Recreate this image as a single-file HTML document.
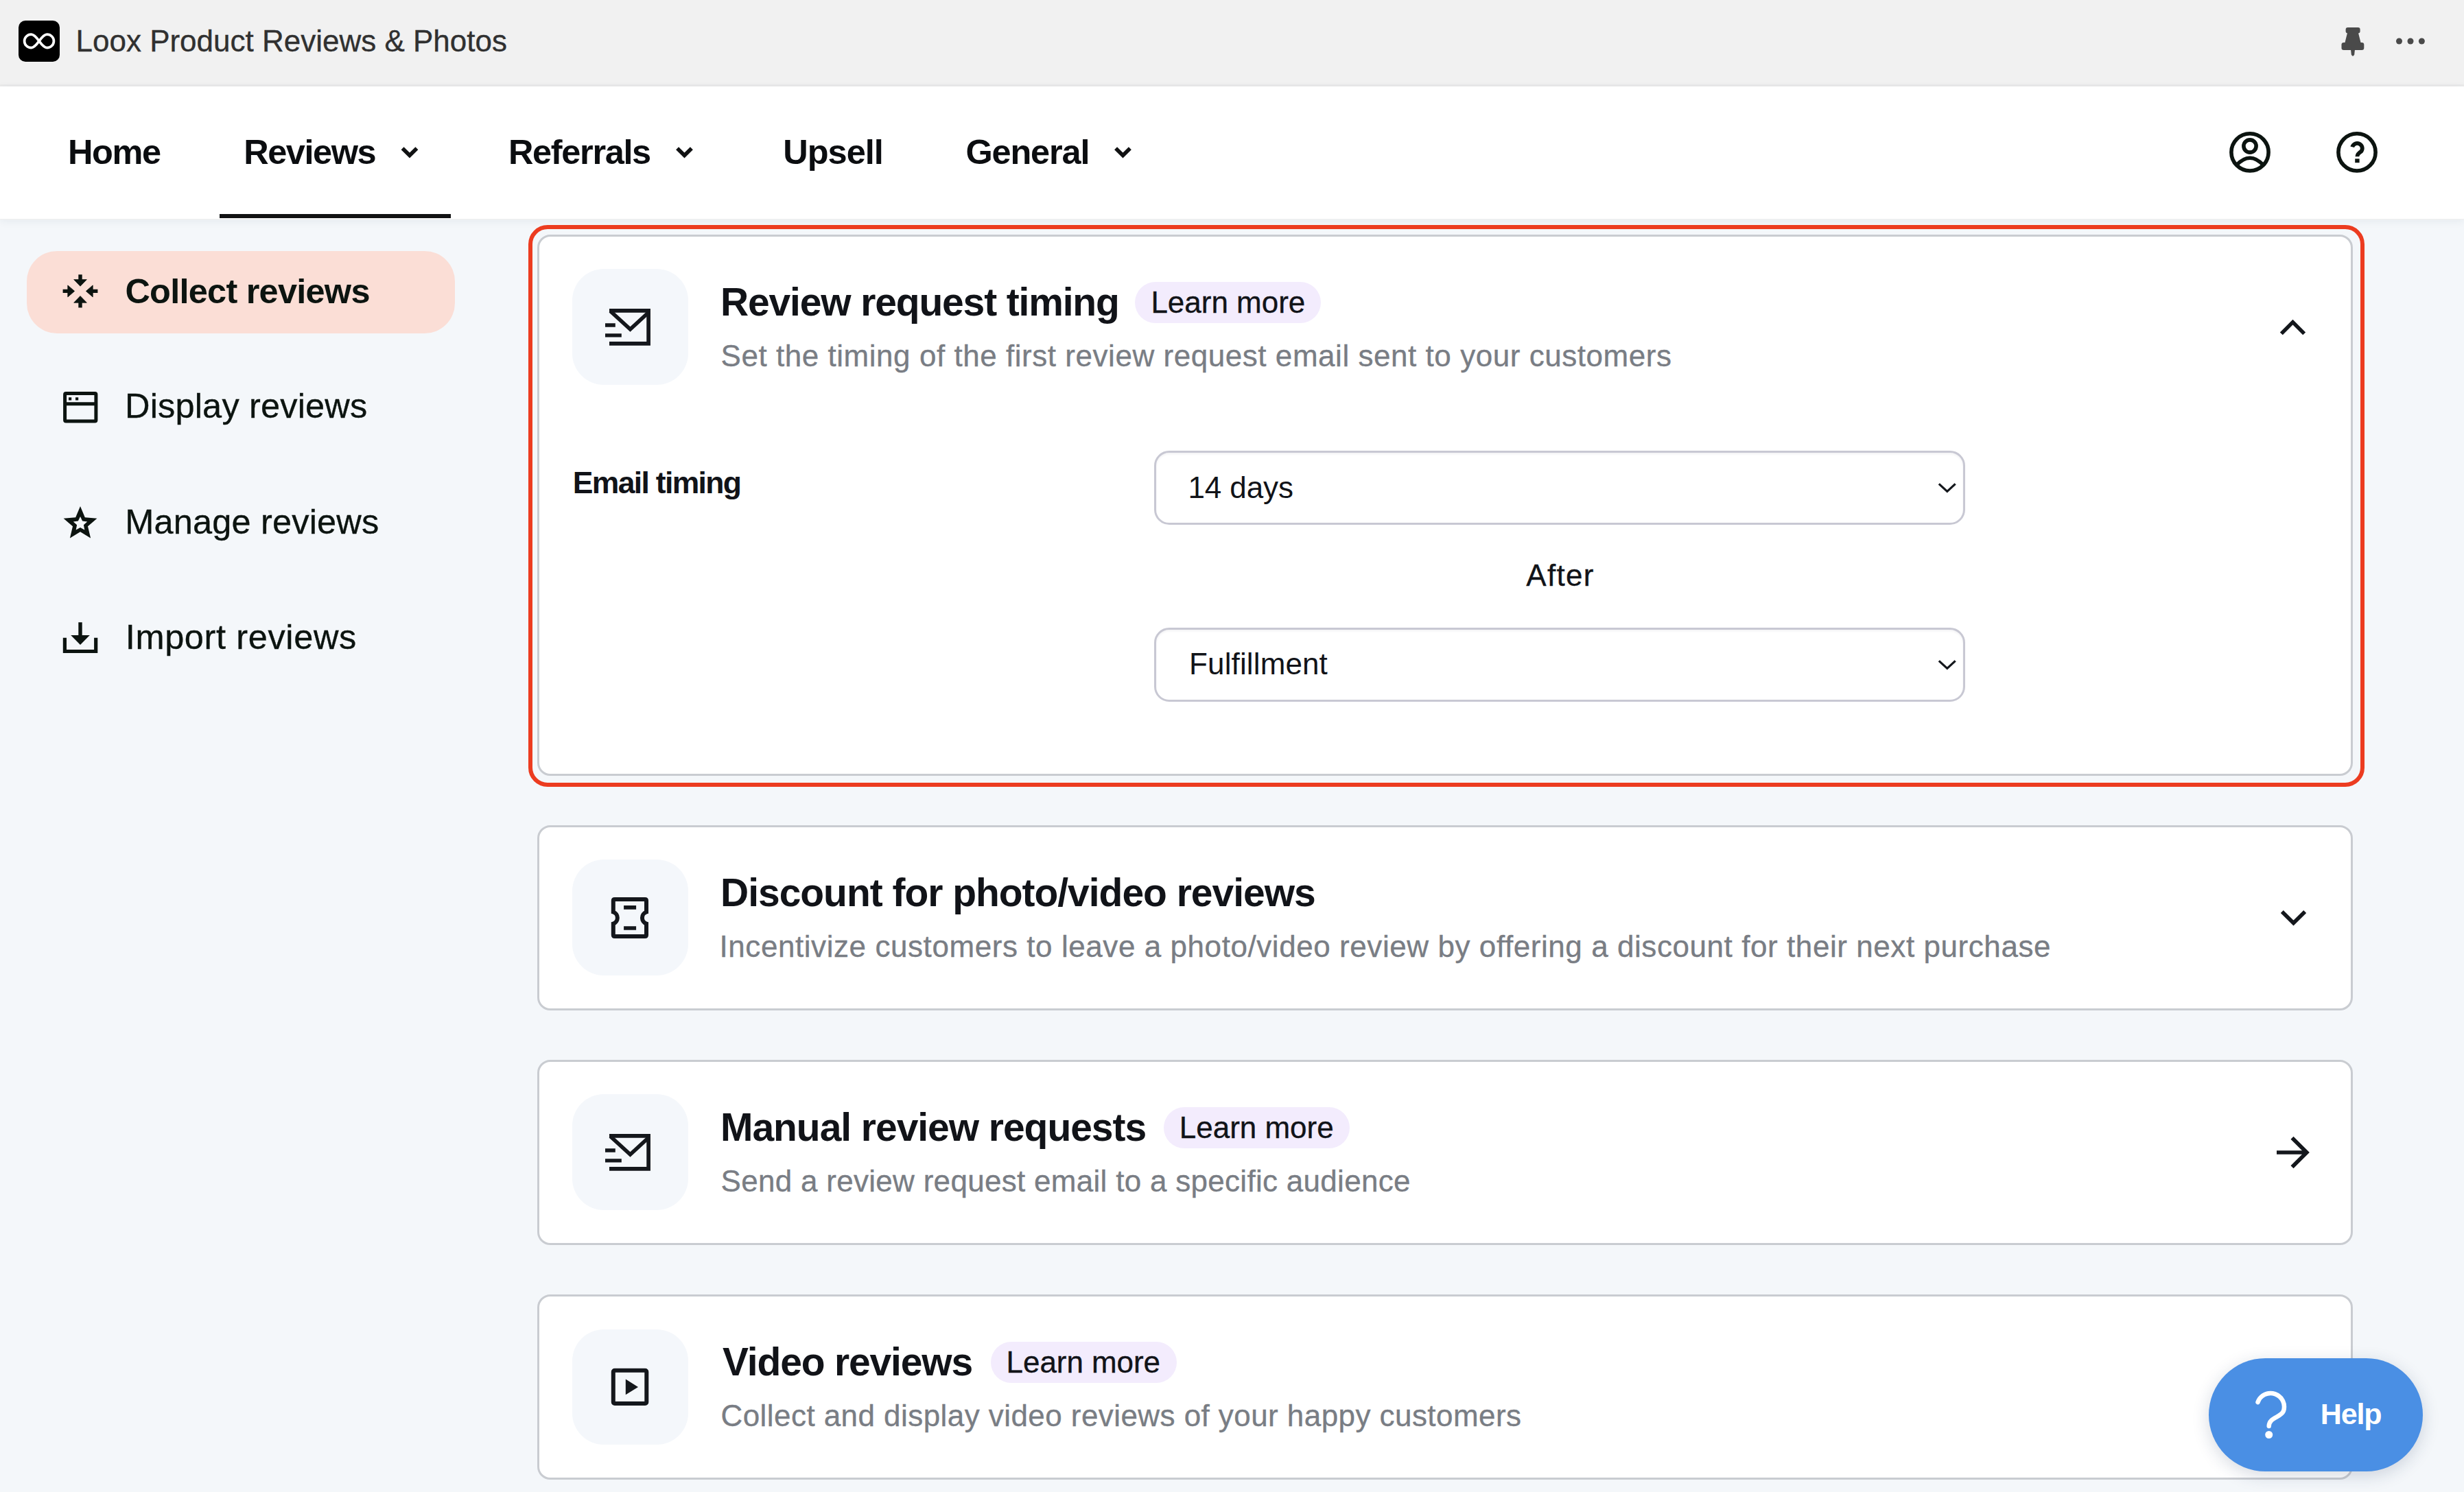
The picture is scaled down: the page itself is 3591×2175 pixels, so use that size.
<!DOCTYPE html>
<html lang="en"><head><meta charset="utf-8"><title>Loox Product Reviews &amp; Photos</title>
<style>
html,body{margin:0;padding:0}
body{width:3591px;height:2175px;overflow:hidden;position:relative;background:#f4f7fa;font-family:"Liberation Sans",sans-serif}
.a{position:absolute;box-sizing:border-box}
.t{position:absolute;white-space:pre;line-height:1;font-family:"Liberation Sans",sans-serif}
#topbar{left:0;top:0;width:3591px;height:126px;background:#f1f1f1;border-bottom:3px solid #eaeaea}
#nav{left:0;top:126px;width:3591px;height:192.5px;background:#fff;box-shadow:0 1px 0 #efefef,0 3px 12px rgba(30,60,90,.07)}
#underline{left:320px;top:312px;width:337px;height:6px;background:#111213}
#logo{left:27px;top:30px;width:60px;height:60px;border-radius:10px;background:#000}
#pill{left:39.3px;top:366.2px;width:624px;height:119.6px;border-radius:44px;background:#fbded6}
.card{left:783px;width:2646px;border:3px solid #c9ccd1;border-radius:19px;background:#fff}
#redo{left:769.6px;top:328px;width:2676px;height:819px;border:6.2px solid #ec3c20;border-radius:28px}
.tile{left:834px;width:169px;height:168.5px;border-radius:46px;background:#f4f7fb}
.lm{height:59.8px;border-radius:30px;background:#f3ecfd}
.sel{left:1682px;width:1182px;height:108px;border:3px solid #c8c8d3;border-radius:22px;background:#fff;box-shadow:inset 0 2px 3px rgba(30,40,60,.06)}
#help{left:3219px;top:1980px;width:312px;height:165px;border-radius:83px;background:#4a8fe4;box-shadow:0 6px 24px rgba(30,50,90,.18)}
.r{-webkit-text-stroke:.35px currentColor}
svg{position:absolute;overflow:visible}

</style></head>
<body>
<header>
<div class="a" id="topbar"></div>
<div class="a" id="logo"></div>
<div class="t r" style="left:110.50px;top:37.75px;font-size:44px;font-weight:400;color:#303030;letter-spacing:-0.002px">Loox Product Reviews &amp; Photos</div>
</header>
<nav>
<div class="a" id="nav"></div>
<div class="a" id="underline"></div>
<div class="t" style="left:99.00px;top:197.25px;font-size:50.5px;font-weight:700;color:#0b0d10;letter-spacing:-1.406px">Home</div>
<div class="t" style="left:355.20px;top:197.25px;font-size:50.5px;font-weight:700;color:#0b0d10;letter-spacing:-1.440px">Reviews</div>
<div class="t" style="left:741.00px;top:197.25px;font-size:50.5px;font-weight:700;color:#0b0d10;letter-spacing:-1.347px">Referrals</div>
<div class="t" style="left:1141.20px;top:197.25px;font-size:50.5px;font-weight:700;color:#0b0d10;letter-spacing:-0.984px">Upsell</div>
<div class="t" style="left:1407.40px;top:197.25px;font-size:50.5px;font-weight:700;color:#0b0d10;letter-spacing:-1.173px">General</div>
</nav>
<aside>
<div class="a" id="pill"></div>
<div class="t" style="left:182.40px;top:399.55px;font-size:50.5px;font-weight:700;color:#0c1410;letter-spacing:-0.758px">Collect reviews</div>
<div class="t r" style="left:182.00px;top:567.45px;font-size:50.5px;font-weight:400;color:#0c1410;letter-spacing:0.176px">Display reviews</div>
<div class="t r" style="left:182.20px;top:735.65px;font-size:50.5px;font-weight:400;color:#0c1410;letter-spacing:0.181px">Manage reviews</div>
<div class="t r" style="left:182.80px;top:903.75px;font-size:50.5px;font-weight:400;color:#0c1410;letter-spacing:0.625px">Import reviews</div>
</aside>
<main>
<div class="a" id="redo"></div>
<section>
<div class="a card" style="top:342px;height:789px"></div>
<div class="a tile" style="top:392.3px"></div>
<div class="a lm" style="left:1654px;top:411.2px;width:271px"></div>
<div class="a sel" style="top:657px"></div>
<div class="a sel" style="top:915px"></div>
<div class="t" style="left:1050.00px;top:411.75px;font-size:57px;font-weight:700;color:#111318;letter-spacing:-1.158px">Review request timing</div>
<div class="t r" style="left:1677.40px;top:419.05px;font-size:44px;font-weight:400;color:#111318;letter-spacing:-0.015px">Learn more</div>
<div class="t r" style="left:1050.50px;top:496.50px;font-size:44px;font-weight:400;color:#797d84;letter-spacing:0.543px">Set the timing of the first review request email sent to your customers</div>
<div class="t" style="left:834.80px;top:682.13px;font-size:44.5px;font-weight:700;color:#111318;letter-spacing:-1.680px">Email timing</div>
<div class="t" style="left:1731.50px;top:688.55px;font-size:44px;font-weight:400;color:#111318;letter-spacing:-0.101px">14 days</div>
<div class="t r" style="left:2224.30px;top:817.35px;font-size:44px;font-weight:400;color:#111318;letter-spacing:1.283px">After</div>
<div class="t" style="left:1733.10px;top:946.45px;font-size:44px;font-weight:400;color:#111318;letter-spacing:0.123px">Fulfillment</div>
</section>
<section>
<div class="a card" style="top:1203px;height:270px"></div>
<div class="a tile" style="top:1253.3px"></div>
<div class="t" style="left:1050.00px;top:1272.75px;font-size:57px;font-weight:700;color:#111318;letter-spacing:-1.024px">Discount for photo/video reviews</div>
<div class="t r" style="left:1048.50px;top:1357.50px;font-size:44px;font-weight:400;color:#797d84;letter-spacing:0.568px">Incentivize customers to leave a photo/video review by offering a discount for their next purchase</div>
</section>
<section>
<div class="a card" style="top:1545px;height:270px"></div>
<div class="a tile" style="top:1595.3px"></div>
<div class="a lm" style="left:1695.8px;top:1614.2px;width:271.5px"></div>
<div class="t" style="left:1050.00px;top:1614.75px;font-size:57px;font-weight:700;color:#111318;letter-spacing:-1.047px">Manual review requests</div>
<div class="t r" style="left:1718.80px;top:1621.85px;font-size:44px;font-weight:400;color:#111318;letter-spacing:-0.015px">Learn more</div>
<div class="t r" style="left:1050.50px;top:1699.50px;font-size:44px;font-weight:400;color:#797d84;letter-spacing:0.294px">Send a review request email to a specific audience</div>
</section>
<section>
<div class="a card" style="top:1887px;height:270px"></div>
<div class="a tile" style="top:1937.5px"></div>
<div class="a lm" style="left:1443.8px;top:1956.2px;width:271.3px"></div>
<div class="t" style="left:1053.00px;top:1956.75px;font-size:57px;font-weight:700;color:#111318;letter-spacing:-1.163px">Video reviews</div>
<div class="t r" style="left:1466.60px;top:1963.85px;font-size:44px;font-weight:400;color:#111318;letter-spacing:-0.059px">Learn more</div>
<div class="t r" style="left:1050.50px;top:2041.50px;font-size:44px;font-weight:400;color:#797d84;letter-spacing:0.436px">Collect and display video reviews of your happy customers</div>
</section>
</main>
<svg width="3591" height="2175" viewBox="0 0 3591 2175" style="left:0;top:0" fill="none">
<path d="M57,59.9 C52,53 49,50.2 45.5,50.2 C40,50.2 35.6,54.5 35.6,59.9 C35.6,65.3 40,69.6 45.5,69.6 C49,69.6 52,66.8 57,59.9 C62,53 65,50.2 68.5,50.2 C74,50.2 78.4,54.5 78.4,59.9 C78.4,65.3 74,69.6 68.5,69.6 C65,69.6 62,66.8 57,59.9Z" stroke="#fff" stroke-width="3.7"/>
<path d="M586.6,216.2 L597.0,226.6 L607.4,216.2" stroke="#111213" stroke-width="5.6"/>
<path d="M987.1,216.2 L997.5,226.6 L1007.9,216.2" stroke="#111213" stroke-width="5.6"/>
<path d="M1626.1,216.2 L1636.5,226.6 L1646.9,216.2" stroke="#111213" stroke-width="5.6"/>
<g fill="#4a4a4a"><rect x="3418.6" y="40" width="21" height="8.4" rx="3"/><path d="M3421.5,46 H3436.5 L3441,64 H3417Z"/><rect x="3412.5" y="62" width="32.8" height="11" rx="3.2"/><path d="M3426,72 H3432 L3431.2,79.5 Q3429,84 3426.8,79.5Z"/>
<circle cx="3496.5" cy="60" r="4.5"/>
<circle cx="3513" cy="60" r="4.5"/>
<circle cx="3529.4" cy="60" r="4.5"/>
</g>
<g stroke="#0c1410" stroke-width="5.6"><circle cx="3279" cy="221.9" r="27.1"/><circle cx="3279" cy="213" r="9.1"/><path d="M3259.3,241 Q3279,219.6 3298.7,241"/></g>
<g stroke="#0c1410" stroke-width="5.6"><circle cx="3435" cy="221.9" r="27.1"/><path d="M3428.2,214.3 A7.4,7.4 0 1 1 3441.4,220.5 Q3435.4,224.4 3435.4,228.2" stroke-width="5.8"/></g><rect x="3432.2" y="231.4" width="6.4" height="5.8" fill="#0c1410"/>
<path d="M117.0,400.3 L117.0,408.6 M117.0,448.5 L117.0,440.2 M91.6,424.4 L99.8,424.4 M142.4,424.4 L134.2,424.4" stroke="#0c1410" stroke-width="5.4"/><path d="M117.0,417.2 L126.3,407.6 L107.7,407.6Z M117.0,431.6 L107.7,441.2 L126.3,441.2Z M108.6,424.4 L98.8,415.9 L98.8,432.9Z M125.4,424.4 L135.2,432.9 L135.2,415.9Z" fill="#0c1410" stroke="#0c1410" stroke-width="0.8" stroke-linejoin="round"/>
<g stroke="#0c1410" stroke-width="5"><rect x="94.6" y="573.6" width="45.3" height="40.4" rx="1.5"/><path d="M94.6,588.7 H139.9"/></g><rect x="100" y="579.3" width="4.2" height="4.2" fill="#0c1410"/><rect x="110" y="579.3" width="4.2" height="4.2" fill="#0c1410"/>
<path d="M117.0,738.0 L123.8,754.3 L141.4,755.8 L128.0,767.3 L132.1,784.5 L117.0,775.3 L101.9,784.5 L106.0,767.3 L92.6,755.8 L110.2,754.3Z M117.0,753.0 L120.1,759.5 L127.2,760.4 L121.9,765.3 L123.3,772.4 L117.0,768.9 L110.7,772.4 L112.1,765.3 L106.8,760.4 L113.9,759.5Z" fill="#0c1410" fill-rule="evenodd"/>
<g stroke="#0c1410" stroke-width="5.2"><path d="M94.4,929.8 V949.5 H139.7 V929.8"/><path d="M117,907.2 V928" stroke-width="5.4"/></g><path d="M103.2,926 H130.8 L117,940Z" fill="#0c1410"/>
<g transform="translate(0,0)" stroke="#14171c" stroke-width="5.7"><path d="M888,452.9 H945.1 V500.8 H888"/><path d="M889.5,453.5 L918.5,480 L945.1,455.5"/><path d="M882,474 H896.8 M882,488.9 H905.8" stroke-width="5.4"/></g>
<g transform="translate(0,1203)" stroke="#14171c" stroke-width="5.7"><path d="M888,452.9 H945.1 V500.8 H888"/><path d="M889.5,453.5 L918.5,480 L945.1,455.5"/><path d="M882,474 H896.8 M882,488.9 H905.8" stroke-width="5.4"/></g>
<g stroke="#14171c" stroke-width="6"><path d="M895.8,1310.9 H940 Q942,1310.9 942,1312.9 V1329.5 A9,9 0 0 0 942,1346.5 V1363 Q942,1365 940,1365 H895.8 Q893.8,1365 893.8,1363 V1346.5 A9,9 0 0 0 893.8,1329.5 V1312.9 Q893.8,1310.9 895.8,1310.9Z"/><path d="M909.1,1322.9 H927.1 M909.1,1353 H927.1" stroke-width="5.6"/></g>
<rect x="893.8" y="1997.8" width="48.5" height="48.2" rx="2" stroke="#14171c" stroke-width="6"/><path d="M911.8,2010.5 L930,2021.9 L911.8,2033.3Z" fill="#14171c"/>
<path d="M3324.8,486.4 L3341.5,469.6 L3358.2,486.4" stroke="#14171c" stroke-width="5.6"/>
<path d="M3325.8,1328.9 L3342.5,1345.6 L3359.2,1328.9" stroke="#14171c" stroke-width="5.6"/>
<path d="M3318,1680 H3361 M3340.5,1658.8 L3361.8,1680 L3340.5,1701.2" stroke="#14171c" stroke-width="5.7"/>
<path d="M2825.8,705.4 L2837.8,716.4 L2849.7,705.4" stroke="#14171c" stroke-width="3.2"/>
<path d="M2825.8,963.4 L2837.8,974.4 L2849.7,963.4" stroke="#14171c" stroke-width="3.2"/>
</svg>
<div class="a" id="help"></div>
<svg width="3591" height="2175" viewBox="0 0 3591 2175" style="left:0;top:0" fill="none">
<path d="M3290.5,2044.2 A19.75,19.75 0 1 1 3327.8,2057.3 C3324,2066.5 3307,2066 3306.7,2079" stroke="#fff" stroke-width="6.5" stroke-linecap="round"/><circle cx="3306.7" cy="2091.5" r="5.5" fill="#fff"/>
</svg>
<div class="t" style="left:3381.80px;top:2040.10px;font-size:43px;font-weight:700;color:#ffffff;letter-spacing:-1.138px">Help</div>
</body></html>
